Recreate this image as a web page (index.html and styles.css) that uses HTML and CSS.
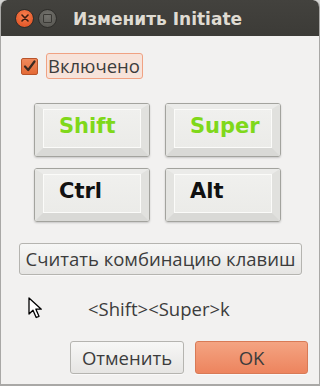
FILE: index.html
```html
<!DOCTYPE html>
<html lang="ru">
<head>
<meta charset="utf-8">
<link rel="stylesheet" href="styles.css">
</head>
<body>
<div class="window">
  <div class="titlebar">
    <span class="wbtn close"><svg width="8" height="8" viewBox="0 0 8 8"><path d="M1 1L7 7M7 1L1 7" stroke="#3a1c10" stroke-width="1.6" stroke-linecap="round"/></svg></span>
    <span class="wbtn max"><span class="sq"></span></span>
    <span class="title">Изменить Initiate</span>
  </div>
  <div class="content">
    <div class="check-row">
      <span class="checkbox"><svg width="15" height="15" viewBox="0 0 15 15"><path d="M3 7.5L6.2 11L12.5 2.5" fill="none" stroke="#3b2a22" stroke-width="2.2" stroke-linecap="round" stroke-linejoin="round"/></svg></span>
      <span class="check-label">Включено</span>
    </div>
    <div class="keys">
      <div class="key"><div class="cap on">Shift</div></div>
      <div class="key"><div class="cap on">Super</div></div>
      <div class="key"><div class="cap">Ctrl</div></div>
      <div class="key"><div class="cap">Alt</div></div>
    </div>
    <button class="btn read">Считать комбинацию клавиш</button>
    <div class="combo-row">
      <svg class="cursor" width="17" height="22" viewBox="0 0 17 22"><path d="M1 1L1 17L5 13.2L8.2 20.5L11 19.3L7.9 12.2L13.3 12.2Z" fill="#fff" stroke="#000" stroke-width="1.3" stroke-linejoin="round"/></svg>
      <span class="combo">&lt;Shift&gt;&lt;Super&gt;k</span>
    </div>
    <div class="actions">
      <button class="btn cancel">Отменить</button>
      <button class="btn ok">OK</button>
    </div>
  </div>
</div>
</body>
</html>
```
FILE: styles.css
```css
html, body {
  margin: 0;
  padding: 0;
  background: #d4d4d2;
}
body {
  width: 320px;
  height: 386px;
  font-family: "Open Sans", "Noto Sans", "DejaVu Sans", sans-serif;
}
.window {
  width: 320px;
  height: 386px;
  box-sizing: border-box;
  background: #f2f1f0;
  border-left: 1px solid #a9a8a6;
  border-right: 1px solid #a9a8a6;
  border-bottom: 2px solid #a9a8a6;
  border-radius: 7px 7px 0 0;
  overflow: hidden;
}
.titlebar {
  height: 36px;
  margin: 0 -1px;
  background: linear-gradient(#43423e, #3c3b37);
  border-radius: 7px 7px 0 0;
  display: flex;
  align-items: center;
  padding-left: 15px;
}
.wbtn {
  width: 19px;
  height: 19px;
  border-radius: 50%;
  display: flex;
  align-items: center;
  justify-content: center;
  box-sizing: border-box;
}
.close {
  background: radial-gradient(circle at 50% 35%, #f7804f, #e55b2c 70%, #c94a20);
  border: 1px solid #2e2d2a;
}
.max {
  margin-left: 4px;
  background: radial-gradient(circle at 50% 35%, #74736e, #5b5a55 75%);
  border: 1px solid #2e2d2a;
}
.sq {
  width: 7px;
  height: 7px;
  border: 1.5px solid #3a3935;
  border-radius: 1px;
}
.title {
  margin-left: 16px;
  color: #dfdbd2;
  font-family: "DejaVu Sans", sans-serif;
  font-weight: bold;
  font-size: 17px;
  margin-top: 1px;
}
.content {
  display: flex;
  flex-direction: column;
  align-items: flex-start;
}
.check-row {
  display: flex;
  align-items: center;
  margin: 17px 0 0 20px;
  height: 26px;
}
.checkbox {
  width: 17px;
  height: 17px;
  box-sizing: border-box;
  border: 1px solid #b9542a;
  border-radius: 2px;
  background: linear-gradient(#f08a5c, #e46a36);
  display: flex;
  align-items: center;
  justify-content: center;
}
.check-label {
  margin-left: 8px;
  height: 26px;
  box-sizing: border-box;
  padding: 0 2px 0 1px;
  border: 1px solid #f0a283;
  border-radius: 3px;
  background: #f7e3da;
  color: #3c3c3c;
  font-size: 18.5px;
  line-height: 24px;
}
.keys {
  display: grid;
  grid-template-columns: 116px 116px;
  grid-auto-rows: 54px;
  column-gap: 15px;
  row-gap: 11px;
  margin: 24px 0 0 33px;
}
.key {
  box-sizing: border-box;
  border: 1px solid #a3a39e;
  border-radius: 3px;
  box-shadow: 0 1px 2px rgba(0,0,0,0.18);
  display: flex;
}
.cap {
  flex: 1;
  border-style: solid;
  border-width: 5px 8px 8px 8px;
  border-color: #ebebe9 #e1e1de #d9d9d6 #e4e4e1;
  border-radius: 2px;
  background: linear-gradient(#f0f0ee, #ebebe8);
  box-shadow: inset 0 0 0 1px #fbfbf9;
  font-family: "DejaVu Sans", sans-serif;
  font-weight: bold;
  font-size: 21px;
  color: #111;
  display: flex;
  align-items: center;
  padding: 0 0 6px 16px;
}
.cap.on {
  color: #7fd81a;
}
.btn {
  font-family: "Open Sans", "Noto Sans", "DejaVu Sans", sans-serif;
  font-size: 18.5px;
  color: #3c3c3c;
  border: 1px solid #b5b4b0;
  border-radius: 3px;
  background: linear-gradient(#f7f7f6, #e6e5e3);
  padding: 0;
  box-shadow: 0 1px 0 rgba(255,255,255,0.6);
}
.read {
  margin: 21px 0 0 18px;
  width: 283px;
  height: 32px;
  line-height: 28px;
}
.combo-row {
  display: flex;
  align-items: center;
  margin: 21px 0 0 27px;
  height: 24px;
}
.combo {
  margin-left: 43px;
  color: #3c3c3c;
  font-size: 18.5px;
}
.actions {
  display: flex;
  gap: 11px;
  align-self: flex-end;
  margin: 21px 11px 0 0;
}
.cancel {
  width: 114px;
  height: 33px;
}
.ok {
  width: 113px;
  height: 33px;
  border-color: #d87a56;
  background: linear-gradient(#f4a482, #ed845e);
}
```
